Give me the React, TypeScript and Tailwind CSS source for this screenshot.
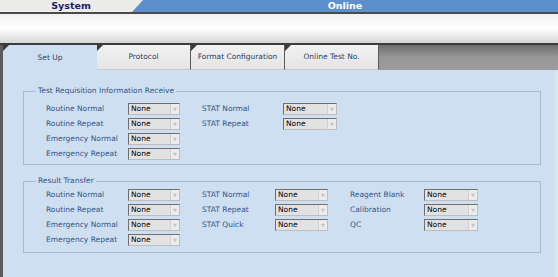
const font = "font-['DejaVu_Sans',sans-serif]";

function Combo({ className }: { className: string }) {
  return (
    <div className={`flex h-[12px] border border-t-[#6f6f6f] border-l-[#6f6f6f] border-r-[#bdbdbd] border-b-[#bdbdbd] bg-[#e2e2e2] ${className}`}>
      <span className="flex-1 pl-[2px] text-[7.5px] leading-[10px] text-black">None</span>
      <span className="flex w-[9px] items-center justify-center border-l border-[#d0d0d0] bg-[#ececec] text-[5px] leading-none text-[#c4c4c4]">▼</span>
    </div>
  );
}

function Label({ text, className }: { text: string; className: string }) {
  return <span className={`text-[7.5px] leading-[12px] text-[#34558a] ${className}`}>{text}</span>;
}

function Tab({ text, active }: { text: string; active?: boolean }) {
  return (
    <div
      className={`relative flex w-[94px] items-center justify-center text-[7.5px] text-[#2c3f6a] ${
        active ? "bg-[#cddff1]" : "border-r border-b border-r-[#5a5a5a] border-b-[#c9c9c9] bg-gradient-to-b from-[#f2f2f2] to-[#e4e4e4]"
      }`}
    >
      <span className="absolute top-0 left-0 border-t-[6px] border-r-[6px] border-t-[#3a3a3a] border-r-transparent" />
      {text}
    </div>
  );
}

export default function App() {
  const group1 = [
    ["Routine Normal", "STAT Normal"],
    ["Routine Repeat", "STAT Repeat"],
    ["Emergency Normal", ""],
    ["Emergency Repeat", ""],
  ];
  const group2 = [
    ["Routine Normal", "STAT Normal", "Reagent Blank"],
    ["Routine Repeat", "STAT Repeat", "Calibration"],
    ["Emergency Normal", "STAT Quick", "QC"],
    ["Emergency Repeat", "", ""],
  ];

  return (
    <div className={`flex h-[277px] w-[558px] flex-col overflow-hidden bg-[#e9e9e7] ${font}`}>
      {/* title bar */}
      <div className="flex h-[14px] border-b-2 border-[#4a4a4a] bg-[#ececea]">
        <div className="w-[140px] pl-[2px] text-center text-[9.5px] font-bold leading-[12px] text-[#1c1d6b]">System</div>
        <div className="ml-[-8px] flex-1 bg-[#5b90cd] text-center text-[9.5px] font-bold leading-[12px] text-white [clip-path:polygon(11px_0,100%_0,100%_100%,0_100%)]">
          Online
        </div>
      </div>

      {/* white band */}
      <div className="h-[31px] border-b-2 border-[#3c3c3c] bg-gradient-to-b from-[#f1f1f1] via-white to-[#d6d6d6]" />

      {/* tabs */}
      <div className="flex h-[25px] border-l-[3px] border-[#5c5c5c] bg-gradient-to-b from-[#6e6e6e] via-[#979797] to-[#9c9c9c]">
        <Tab text="Set Up" active />
        <Tab text="Protocol" />
        <Tab text="Format Configuration" />
        <Tab text="Online Test No." />
      </div>

      {/* content */}
      <div className="flex-1 border-l-[3px] border-r-[3px] border-l-[#5c5c5c] border-r-[#d9e6f3] bg-[#cddff1] pt-[16px]">
        <fieldset className="ml-[20px] w-[518px] border border-[#a7bbd4] pr-[10px] pb-[4px] pl-[12px]">
          <legend className="px-[2px] text-[7.5px] leading-[10px] text-[#34558a]">Test Requisition Information Receive</legend>
          <div className="flex flex-col gap-[3px] pt-[7px] pl-[10px]">
            {group1.map(([a, b]) => (
              <div key={a} className="flex h-[12px] items-center">
                <Label text={a} className="w-[82px]" />
                <Combo className="w-[52px]" />
                {b && (
                  <>
                    <Label text={b} className="ml-[22px] w-[81px]" />
                    <Combo className="w-[54px]" />
                  </>
                )}
              </div>
            ))}
          </div>
        </fieldset>

        <fieldset className="mt-[11px] ml-[20px] w-[518px] border border-[#a7bbd4] pr-[10px] pb-[6px] pl-[12px]">
          <legend className="px-[2px] text-[7.5px] leading-[10px] text-[#34558a]">Result Transfer</legend>
          <div className="flex flex-col gap-[3px] pt-[3px] pl-[10px]">
            {group2.map(([a, b, c]) => (
              <div key={a} className="flex h-[12px] items-center">
                <Label text={a} className="w-[82px]" />
                <Combo className="w-[52px]" />
                {b && (
                  <>
                    <Label text={b} className="ml-[22px] w-[73px]" />
                    <Combo className="w-[53px]" />
                  </>
                )}
                {c && (
                  <>
                    <Label text={c} className="ml-[22px] w-[74px]" />
                    <Combo className="w-[54px]" />
                  </>
                )}
              </div>
            ))}
          </div>
        </fieldset>
      </div>
    </div>
  );
}
